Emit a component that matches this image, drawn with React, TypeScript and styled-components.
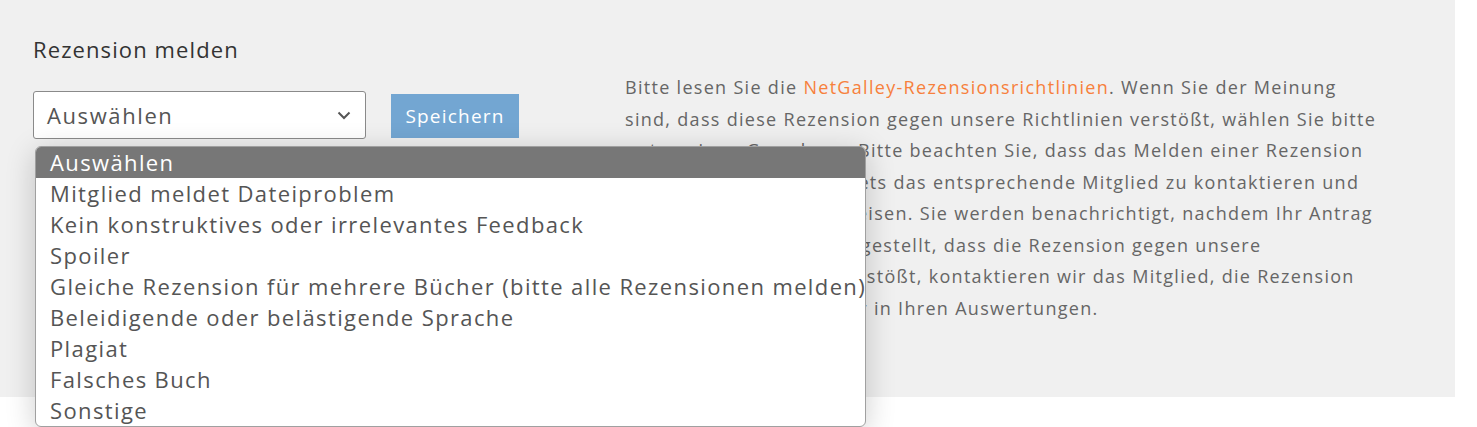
import React from "react";
import styled, { createGlobalStyle } from "styled-components";

const GlobalStyle = createGlobalStyle`
  html, body { margin: 0; padding: 0; background: #ffffff; }
  body { font-family: "Open Sans", "Liberation Sans", sans-serif; }
  * { box-sizing: border-box; }
`;

const Page = styled.main`
  height: 427px;
  width: 1477px;
`;

const Panel = styled.section`
  width: 1455px;
  height: 397px;
  background: #f0f0f0;
  display: flex;
  padding: 36px 0 0 33px;
`;

const LeftColumn = styled.div`
  width: 592px;
  display: flex;
  flex-direction: column;
`;

const Heading = styled.h2`
  margin: 0;
  font-size: 22px;
  font-weight: 400;
  color: #333333;
  line-height: 26px;
  letter-spacing: 1.1px;
`;

const FormRow = styled.div`
  margin-top: 29px;
  display: flex;
  align-items: flex-start;
  gap: 25px;
`;

const SelectWrap = styled.div`
  position: relative;
  width: 333px;
`;

const SelectBox = styled.div`
  height: 48px;
  border: 1px solid #8a8a8a;
  border-radius: 3px;
  background: #ffffff;
  display: flex;
  align-items: center;
  justify-content: space-between;
  padding: 0 14px 0 13px;
  font-size: 22px;
  letter-spacing: 1.6px;
  color: #555555;
`;

const Chevron = styled.svg`
  width: 14px;
  height: 9px;
`;

const SaveButton = styled.button`
  margin-top: 3px;
  width: 128px;
  height: 44px;
  border: none;
  border-radius: 0;
  background: #73a6d2;
  color: #ffffff;
  font-family: inherit;
  font-size: 19px;
  letter-spacing: 1.2px;
  padding: 0;
`;

const Popup = styled.ul`
  position: absolute;
  top: 55px;
  left: 2px;
  width: 831px;
  margin: 0;
  padding: 0;
  list-style: none;
  background: #ffffff;
  border: 1px solid #a0a0a0;
  border-radius: 6px;
  overflow: hidden;
  box-shadow: 0 6px 30px rgba(0, 0, 0, 0.2);
  z-index: 10;
`;

const Option = styled.li<{ $active?: boolean }>`
  height: 31px;
  line-height: 31px;
  padding-left: 14px;
  font-size: 22px;
  letter-spacing: 1.38px;
  white-space: nowrap;
  color: ${(p) => (p.$active ? "#ffffff" : "#555555")};
  background: ${(p) => (p.$active ? "#777777" : "transparent")};
`;

const RightColumn = styled.div`
  padding-top: 36px;
`;

const Paragraph = styled.p`
  margin: 0;
  font-size: 18px;
  line-height: 31.5px;
  letter-spacing: 1.3px;
  color: #666666;
`;

const Line = styled.span`
  display: block;
  white-space: nowrap;
`;

const GuideLink = styled.a`
  color: #f7803c;
  text-decoration: none;
`;

const options = [
  "Auswählen",
  "Mitglied meldet Dateiproblem",
  "Kein konstruktives oder irrelevantes Feedback",
  "Spoiler",
  "Gleiche Rezension für mehrere Bücher (bitte alle Rezensionen melden)",
  "Beleidigende oder belästigende Sprache",
  "Plagiat",
  "Falsches Buch",
  "Sonstige",
];

export default function App() {
  return (
    <Page>
      <GlobalStyle />
      <Panel>
        <LeftColumn>
          <Heading>Rezension melden</Heading>
          <FormRow>
            <SelectWrap>
              <SelectBox>
                <span>Auswählen</span>
                <Chevron viewBox="0 0 14 9">
                  <path d="M1.5 1.5 L7 7 L12.5 1.5" fill="none" stroke="#555" strokeWidth="2" />
                </Chevron>
              </SelectBox>
              <Popup>
                {options.map((o, i) => (
                  <Option key={o} $active={i === 0}>
                    {o}
                  </Option>
                ))}
              </Popup>
            </SelectWrap>
            <SaveButton>Speichern</SaveButton>
          </FormRow>
        </LeftColumn>
        <RightColumn>
          <Paragraph>
            <Line>
              Bitte lesen Sie die <GuideLink href="#">NetGalley-Rezensionsrichtlinien</GuideLink>. Wenn Sie der Meinung
            </Line>
            <Line>sind, dass diese Rezension gegen unsere Richtlinien verstößt, wählen Sie bitte</Line>
            <Line>unten einen Grund aus. Bitte beachten Sie, dass das Melden einer Rezension</Line>
            <Line>NetGalley verpflichtet stets das entsprechende Mitglied zu kontaktieren und</Line>
            <Line>solche Rezension abzuweisen. Sie werden benachrichtigt, nachdem Ihr Antrag</Line>
            <Line>geprüft wurde. Wird festgestellt, dass die Rezension gegen unsere</Line>
            <Line>Rezensionsrichtlinien verstößt, kontaktieren wir das Mitglied, die Rezension</Line>
            <Line>erscheint nun nicht mehr in Ihren Auswertungen.</Line>
          </Paragraph>
        </RightColumn>
      </Panel>
    </Page>
  );
}
